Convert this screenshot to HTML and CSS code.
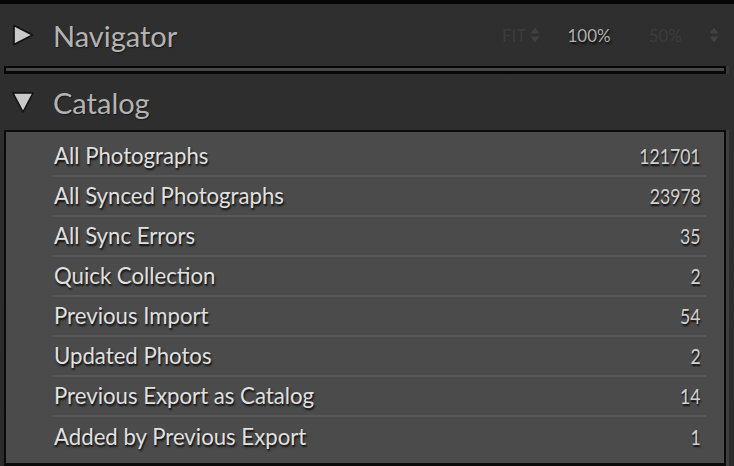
FILE: index.html
```html
<!DOCTYPE html>
<html lang="en">
<head>
<meta charset="utf-8">
<link rel="stylesheet" href="styles.css">
</head>
<body>
<div class="app">
  <div class="topbar"></div>
  <div class="head head-nav">
    <svg class="tri" width="24" height="24" viewBox="0 0 24 24"><path d="M3 2.5 L21.5 12 L3 21.5 Z" fill="#c9c9c9" stroke="#111" stroke-width="1.6" stroke-linejoin="round"/></svg>
    <span class="title">Navigator</span>
    <div class="zoom">
      <span class="z dim">FIT</span>
      <svg class="ud" width="10" height="18" viewBox="0 0 10 18"><path d="M0.5 7.5 L5 1.5 L9.5 7.5 Z M0.5 10.5 L5 16.5 L9.5 10.5 Z" fill="#404040"/></svg>
      <span class="z on">100%</span>
      <span class="z dim fifty">50%</span>
      <svg class="ud last" width="10" height="18" viewBox="0 0 10 18"><path d="M0.5 7.5 L5 1.5 L9.5 7.5 Z M0.5 10.5 L5 16.5 L9.5 10.5 Z" fill="#424242"/></svg>
    </div>
  </div>
  <div class="sep"></div>
  <div class="head head-cat">
    <svg class="tri" width="24" height="24" viewBox="0 0 24 24"><path d="M2 3 L22 3 L12 22 Z" fill="#c9c9c9" stroke="#111" stroke-width="1.6" stroke-linejoin="round"/></svg>
    <span class="title">Catalog</span>
  </div>
  <div class="box">
    <div class="row"><span class="name">All Photographs</span><span class="num">121701</span></div>
    <div class="row"><span class="name">All Synced Photographs</span><span class="num">23978</span></div>
    <div class="row"><span class="name">All Sync Errors</span><span class="num">35</span></div>
    <div class="row"><span class="name">Quick Collection</span><span class="num">2</span></div>
    <div class="row"><span class="name">Previous Import</span><span class="num">54</span></div>
    <div class="row"><span class="name">Updated Photos</span><span class="num">2</span></div>
    <div class="row"><span class="name">Previous Export as Catalog</span><span class="num">14</span></div>
    <div class="row last"><span class="name">Added by Previous Export</span><span class="num">1</span></div>
  </div>
</div>
</body>
</html>
```
FILE: styles.css
```css
html, body {
  margin: 0;
  padding: 0;
  background: #2c2c2c;
}
.app {
  width: 734px;
  height: 466px;
  overflow: hidden;
  background: linear-gradient(#2f2f2f, #2b2b2b);
  font-family: "Lato", "Open Sans", sans-serif;
}
.topbar {
  height: 4px;
  background: #050505;
}
.head {
  display: flex;
  align-items: center;
  padding-left: 11px;
}
.head-nav {
  height: 62px;
}
.head-cat {
  height: 56px;
}
.tri {
  flex: none;
}
.title {
  margin-left: 18px;
  font-size: 29px;
  color: #b3b3b3;
  text-shadow: 1px 1px 1px rgba(0,0,0,0.5);
}
.zoom {
  margin-left: auto;
  margin-right: 15px;
  display: flex;
  align-items: center;
}
.z {
  font-size: 17px;
}
.dim {
  color: #3c3c3c;
}
.on {
  color: #b0b0b0;
  margin-left: 27px;
  text-shadow: 1px 2px 2px rgba(0,0,0,0.8);
}
.ud {
  margin-left: 4px;
}
.fifty {
  margin-left: 38px;
}
.ud.last {
  margin-left: 27px;
}
.sep {
  margin-left: 4px;
  width: 718px;
  height: 3px;
  background: #474747;
  border: 2px solid #080808;
  border-bottom-width: 3px;
  box-shadow: 3px 0 0 #383838;
}
.box {
  margin-left: 4px;
  width: 654px;
  height: 320px;
  background: #4b4b4b;
  border: 2px solid #0a0a0a;
  border-bottom-width: 3px;
  padding: 5px 18px 6px 46px;
  box-shadow: 3px 0 0 #3e3e3e;
}
.row {
  height: 36px;
  padding: 0 5px 2px 2px;
  border-bottom: 2px solid #585858;
  display: flex;
  align-items: center;
  justify-content: space-between;
  font-size: 22.2px;
  text-shadow: 1px 2px 2px rgba(0,0,0,0.85);
}
.row.last {
  border-bottom: 0;
  height: 38px;
}
.name {
  color: #e0e0e0;
}
.num {
  display: inline-block;
  color: #d0d0d0;
  font-size: 22px;
  transform: scaleX(0.8);
  transform-origin: right center;
}
```
